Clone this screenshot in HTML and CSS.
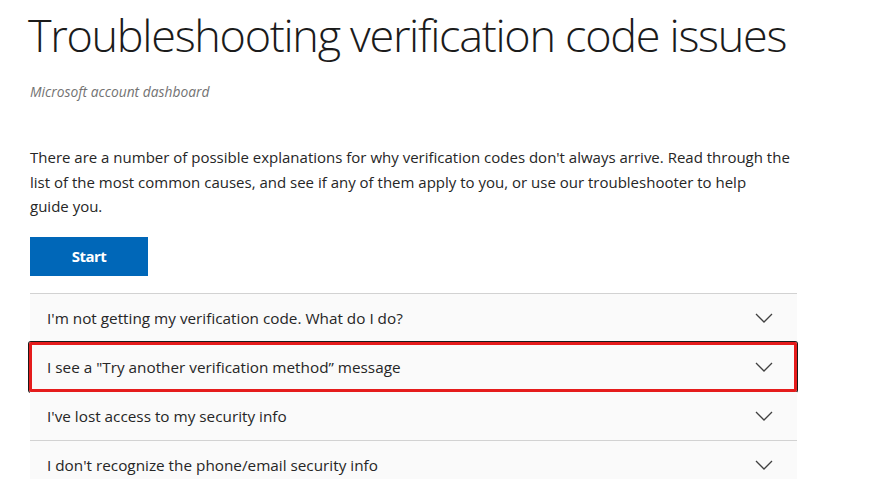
FILE: index.html
```html
<!DOCTYPE html>
<html lang="en">
<head>
<meta charset="utf-8">
<title>Troubleshooting verification code issues</title>
<link rel="stylesheet" href="styles.css">
</head>
<body>
<main class="page">
  <h1 class="title">Troubleshooting verification code issues</h1>
  <p class="subtitle">Microsoft account dashboard</p>
  <p class="intro">There are a number of possible explanations for why verification codes don't always arrive. Read through the list of the most common causes, and see if any of them apply to you, or use our troubleshooter to help<br>guide you.</p>
  <button class="start" type="button">Start</button>
  <div class="accordion">
    <div class="row"><span>I'm not getting my verification code. What do I do?</span><svg class="chev" width="18" height="10" viewBox="0 0 18 10"><polyline points="1,1 9,9 17,1"/></svg></div>
    <div class="row highlighted"><span>I see a "Try another verification method” message</span><svg class="chev" width="18" height="10" viewBox="0 0 18 10"><polyline points="1,1 9,9 17,1"/></svg><span class="mark"></span></div>
    <div class="row"><span>I've lost access to my security info</span><svg class="chev" width="18" height="10" viewBox="0 0 18 10"><polyline points="1,1 9,9 17,1"/></svg></div>
    <div class="row"><span>I don't recognize the phone/email security info</span><svg class="chev" width="18" height="10" viewBox="0 0 18 10"><polyline points="1,1 9,9 17,1"/></svg></div>
  </div>
</main>
</body>
</html>
```
FILE: styles.css
```css
html, body {
  margin: 0;
  padding: 0;
  background: #ffffff;
}
body {
  font-family: "Open Sans", "Noto Sans", "Liberation Sans", sans-serif;
  color: #262626;
  overflow: hidden;
}
.page {
  padding: 0 0 0 30px;
  width: 767px;
}
.title {
  font-weight: 300;
  font-size: 45px;
  line-height: 56px;
  margin: 7px 0 0 -2px;
  color: #1b1b1b;
  letter-spacing: -1.3px;
  white-space: nowrap;
}
.subtitle {
  font-style: italic;
  font-size: 13.8px;
  line-height: 18px;
  color: #737373;
  margin: 20px 0 0 0;
}
.intro {
  font-size: 15px;
  line-height: 24.5px;
  margin: 44px 0 0 0;
  color: #262626;
  width: 775px;
}
.start {
  display: block;
  margin-top: 18px;
  width: 118px;
  height: 39px;
  border: none;
  background: #0067b8;
  color: #fff;
  font-family: "Open Sans", sans-serif;
  font-weight: 700;
  font-size: 15px;
  letter-spacing: -0.5px;
  padding: 0;
}
.accordion {
  margin-top: 17px;
  border-top: 1px solid #d2d2d2;
}
.row {
  position: relative;
  display: flex;
  align-items: center;
  justify-content: space-between;
  height: 48px;
  padding: 0 24px 0 17px;
  background: #fafafa;
  border-bottom: 1px solid #d2d2d2;
  font-size: 15.3px;
  color: #262626;
}
.chev polyline {
  fill: none;
  stroke: #404040;
  stroke-width: 1.3;
}
.mark {
  position: absolute;
  left: -1px;
  right: 0;
  top: -1px;
  bottom: -1px;
  border: 3px solid #e51c1c;
  box-shadow: 0 0 0 1px #1a1a1a;
  border-radius: 2px;
}
```
